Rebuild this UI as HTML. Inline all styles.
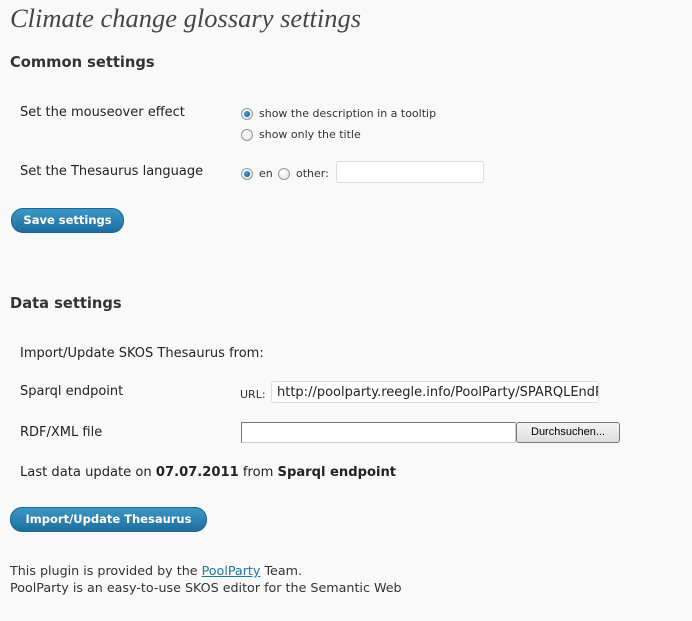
<!DOCTYPE html>
<html><head><style>
body{margin:0;width:692px;height:621px;background:#f9f9f9;font-family:"DejaVu Sans",Verdana,sans-serif;color:#333;position:relative;overflow:hidden}
.a{position:absolute;white-space:nowrap}
h1{position:absolute;left:10px;top:3px;margin:0;font:italic 26.5px "Liberation Serif",serif;color:#464646;font-weight:normal}
h3{position:absolute;left:10px;margin:0;font-size:14.7px;font-weight:bold;color:#333}
.l{font-size:13px;color:#222;left:20px}
.s{font-size:11px;color:#333}
.r{position:absolute;width:10px;height:10px;border-radius:50%;border:1px solid #999;background:radial-gradient(circle at 40% 35%,#fff,#ddd)}
.r.on::after{content:"";position:absolute;left:2px;top:2px;width:6px;height:6px;border-radius:50%;background:radial-gradient(circle at 40% 35%,#4aa3d8,#0a4c78)}
.btn{position:absolute;height:23px;border-radius:12px;background:linear-gradient(#3c97c4,#1e6e9e);border:1px solid #1d6491;color:#fff;font-weight:bold;font-size:11.5px;line-height:22px;text-align:center}
.in{position:absolute;background:#fff;border:1px solid #ddd;border-radius:3px}
</style></head><body>
<h1>Climate change glossary settings</h1>
<h3 style="top:54px">Common settings</h3>
<div class="a l" style="top:105px">Set the mouseover effect</div>
<div class="r on" style="left:241px;top:108px"></div><div class="a s" style="left:259px;top:107px">show the description in a tooltip</div>
<div class="r" style="left:241px;top:129px"></div><div class="a s" style="left:259px;top:128px">show only the title</div>
<div class="a l" style="top:164px">Set the Thesaurus language</div>
<div class="r on" style="left:241px;top:168px"></div><div class="a s" style="left:259px;top:167px">en</div>
<div class="r" style="left:278px;top:168px"></div><div class="a s" style="left:296px;top:167px">other:</div>
<div class="in" style="left:336px;top:161px;width:146px;height:20px"></div>
<div class="btn" style="left:11px;top:208px;width:111px">Save settings</div>
<h3 style="top:295px">Data settings</h3>
<div class="a l" style="top:346px">Import/Update SKOS Thesaurus from:</div>
<div class="a l" style="top:384px">Sparql endpoint</div>
<div class="a" style="left:240px;top:388px;font-size:11px">URL:</div>
<div class="in" style="left:271px;top:381px;width:326px;height:20px;overflow:hidden"><div class="a" style="left:5px;top:3px;font-size:13px;color:#222">http://poolparty.reegle.info/PoolParty/SPARQLEndPoint</div></div>
<div class="a l" style="top:425px">RDF/XML file</div>
<div style="position:absolute;left:241px;top:422px;width:273px;height:19px;background:#fff;border:1px solid #888;border-color:#777 #ccc #ccc #777"></div>
<div style="position:absolute;left:516px;top:422px;width:102px;height:19px;background:linear-gradient(#f4f4f4,#ddd);border:1px solid #777;border-radius:3px;font:11px 'Liberation Sans',sans-serif;text-align:center;line-height:19px;color:#000">Durchsuchen...</div>
<div class="a l" style="top:465px;font-size:13.1px">Last data update on <b>07.07.2011</b> from <b>Sparql endpoint</b></div>
<div class="btn" style="left:10px;top:507px;width:195px">Import/Update Thesaurus</div>
<div class="a" style="left:10px;top:563px;font-size:12.7px;color:#333">This plugin is provided by the <span style="color:#21759b;text-decoration:underline">PoolParty</span> Team.</div>
<div class="a" style="left:10px;top:580px;font-size:12.7px;color:#333">PoolParty is an easy-to-use SKOS editor for the Semantic Web</div>
</body></html>
